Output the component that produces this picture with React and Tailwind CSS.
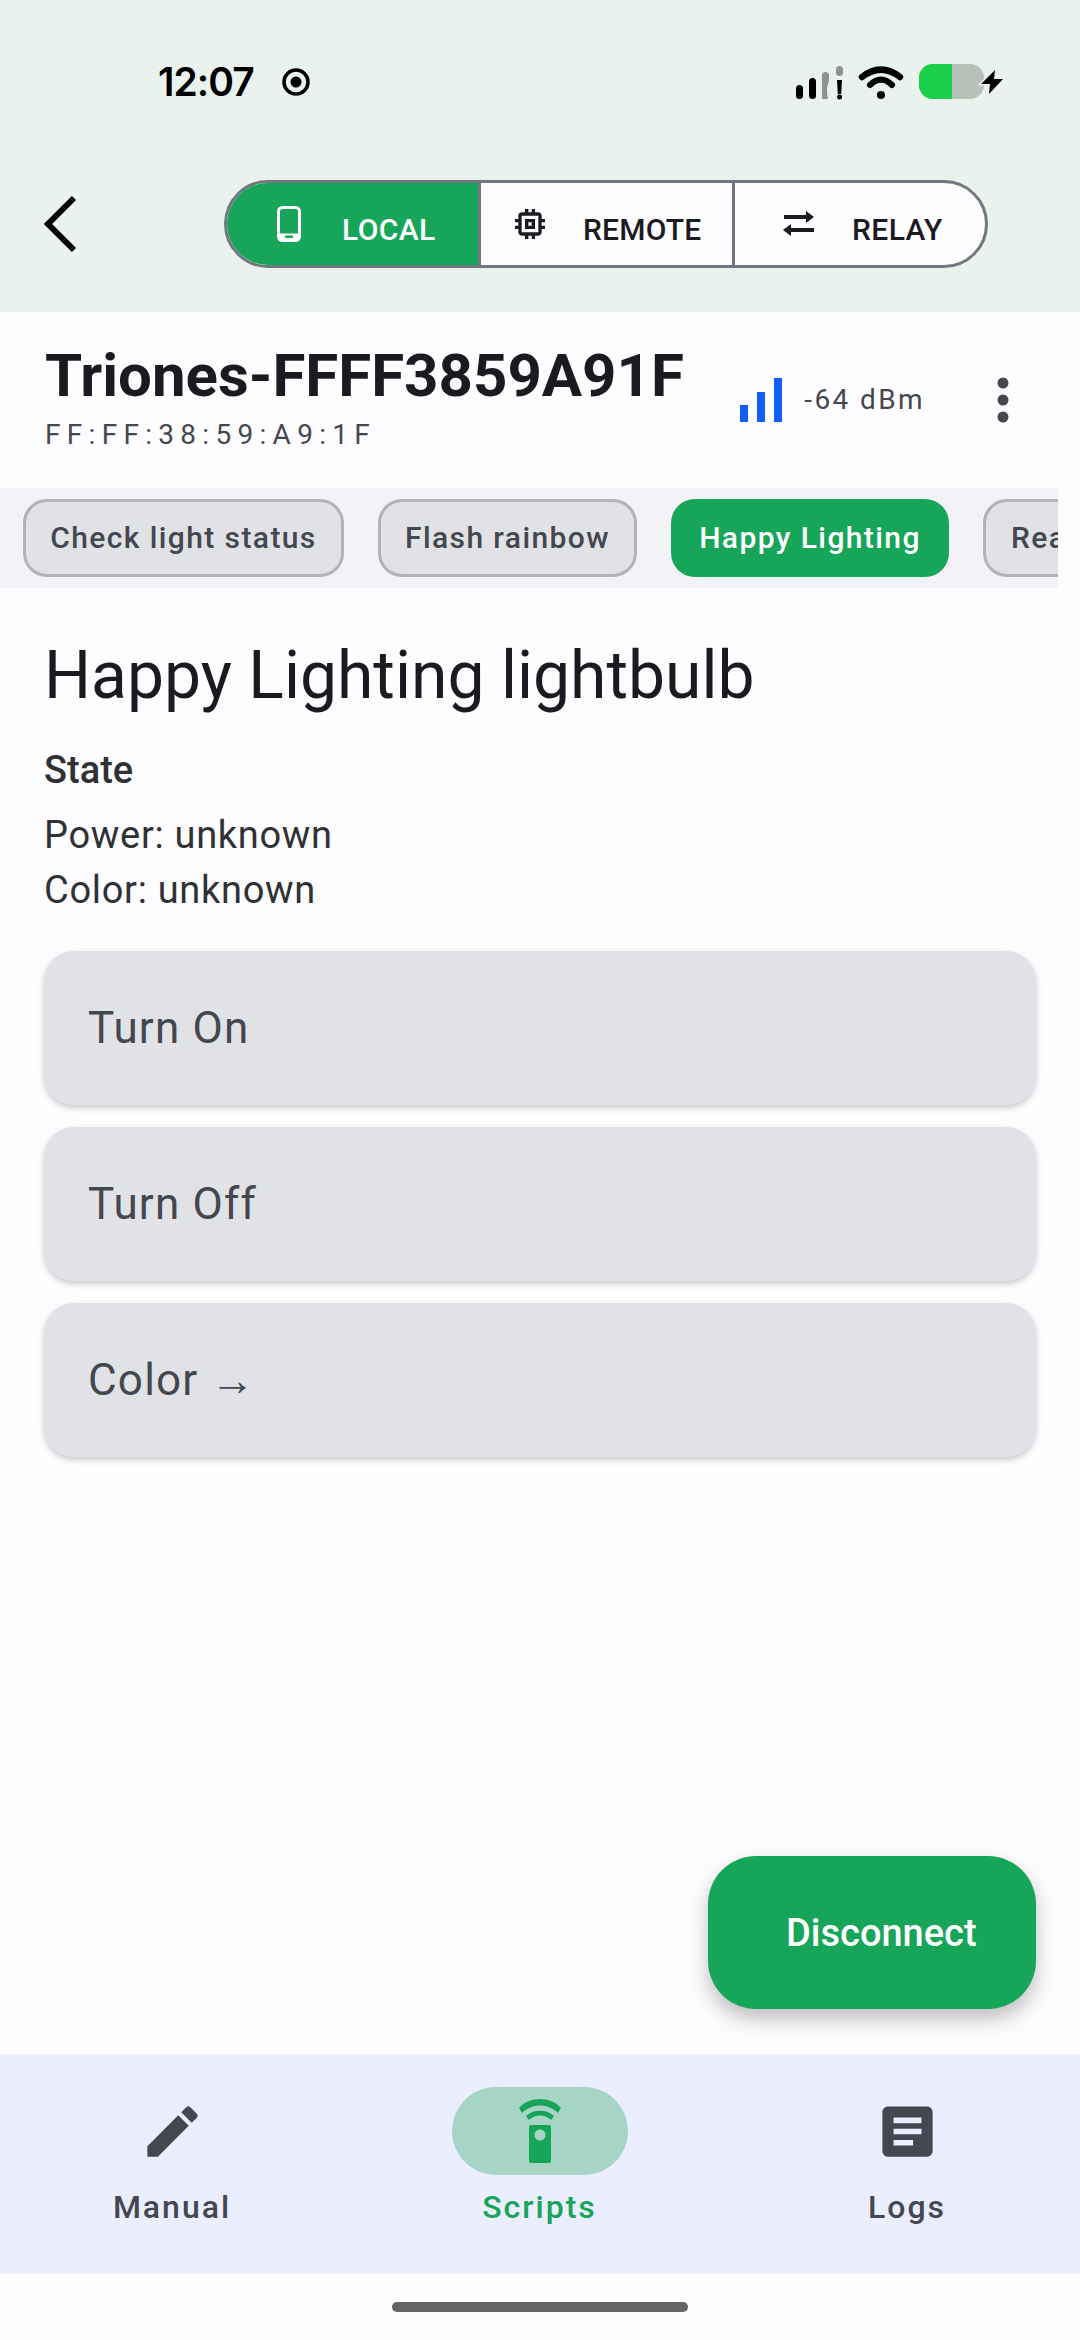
import React from "react";

const Chip = ({ children, active, w }) => (
  <div className={`shrink-0 h-[78px] rounded-[24px] flex items-center justify-center text-[30px] font-medium tracking-[1.4px] leading-[36px] pb-[1px] ${active ? "bg-[#17a55a] text-white" : "bg-[#e0e2e5] text-[#44474f] border-[3px] border-[#b2b3b7]"} ${w}`}>
    {children}
  </div>
);

const Action = ({ children }) => (
  <div className="h-[154px] rounded-[30px] bg-[#e0e2e5] shadow-[0_3px_6px_rgba(0,0,0,0.2)] flex items-center pl-[44px] text-[44px] tracking-[1.200px] text-[#44474f]">
    {children}
  </div>
);

const NavItem = ({ icon, label, active }) => (
  <div className="w-[176px] flex flex-col items-center">
    <div className={`w-[176px] h-[88px] rounded-[44px] flex items-center justify-center ${active ? "bg-[#a6d5c6]" : ""}`}>{icon}</div>
    <div className={`mt-[8px] text-[32px] leading-[48px] font-medium tracking-[2px] whitespace-nowrap ${active ? "text-[#17a55a]" : "text-[#44474f]"}`}>{label}</div>
  </div>
);

export default function App() {
  return (
    <div className="w-[1080px] h-[2340px] flex flex-col bg-[#fdfcff] overflow-hidden font-['Roboto',sans-serif]">
      <div className="h-[312px] bg-[#e9f2ec] flex flex-col">
        <div className="h-[164px] flex items-center pl-[158px] pr-[77px]">
          <span className="text-[39px] font-semibold text-black font-['Inter',sans-serif] tracking-[-1px]">12:07</span>
          <svg className="ml-[27px]" width="30" height="30" viewBox="0 0 30 30"><circle cx="15" cy="15" r="12" fill="none" stroke="#000" strokeWidth="3.500"/><circle cx="15" cy="15" r="5.500" fill="#000"/></svg>
          <div className="flex-1" />
          <svg width="207" height="36" viewBox="0 0 207 36">
            <rect x="0" y="21" width="7" height="14" rx="3.500" fill="#000"/>
            <rect x="13" y="14" width="7" height="21" rx="3.500" fill="#000"/>
            <path d="M26 35 V11.500 a3.500 3.500 0 0 1 7 0 v6 q-3.500 5 -1 17.500 Z" fill="#8f928f"/>
            <rect x="40" y="2" width="7" height="10" rx="3.500" fill="#8f928f"/>
            <path d="M41 16 h5 l-.8 14 h-3.400 Z" fill="#000"/>
            <circle cx="43.500" cy="33" r="2.500" fill="#000"/>
            <path d="M66 13 Q85 -1.600 104 13" fill="none" stroke="#000" strokeWidth="6.500" strokeLinecap="round"/>
            <path d="M74 21 Q85 10.400 96 21" fill="none" stroke="#000" strokeWidth="6" strokeLinecap="round"/>
            <circle cx="85" cy="31" r="4" fill="#000"/>
            <rect x="123" y="0" width="65" height="35" rx="14" fill="#b8c0ba"/>
            <path d="M137 0 h19 v35 h-19 a14 14 0 0 1 -14 -14 v-7 a14 14 0 0 1 14 -14 Z" fill="#1bd14b"/>
            <path d="M199 6 L185 20 H194 L193 30 L207 15 H198 Z" fill="#000" stroke="#e9f2ec" strokeWidth="3" paintOrder="stroke"/>
          </svg>
        </div>
        <div className="h-[88px] mt-[16px] flex items-center pl-[40px]">
          <svg width="44" height="60" viewBox="0 0 44 60" fill="none"><path d="M34 4 L8 30 L34 56" stroke="#000" strokeWidth="6"/></svg>
          <div className="ml-[140px] w-[764px] h-[88px] rounded-[44px] border-[3px] border-[#72767e] flex overflow-hidden bg-[#fdfcff] text-[30px] font-medium">
            <div className="w-[251px] bg-[#17a55a] text-white flex items-center pl-[50px]">
              <svg width="24" height="36" viewBox="0 0 24 36" fill="none"><rect x="1.500" y="1.500" width="21" height="33" rx="4" stroke="#fff" strokeWidth="3"/><path d="M2 27.500h20V31a3 3 0 0 1-3 3H5a3 3 0 0 1-3-3Z" fill="#fff"/><rect x="8" y="29.500" width="8" height="2.500" fill="#17a55a"/></svg>
              <span className="ml-[41px] pt-[10px] tracking-[0.4px]">LOCAL</span>
            </div>
            <div className="w-[254px] border-l-[3px] border-[#72767e] text-[#1b1b1f] flex items-center pl-[29px]">
              <svg width="40" height="40" viewBox="0 0 24 24" fill="#1b1b1f"><path d="M15 9H9v6h6V9zm-2 4h-2v-2h2v2zm8-2V9h-2V7c0-1.100-.9-2-2-2h-2V3h-2v2h-2V3H9v2H7c-1.100 0-2 .9-2 2v2H3v2h2v2H3v2h2v2c0 1.100.9 2 2 2h2v2h2v-2h2v2h2v-2h2c1.100 0 2-.9 2-2v-2h2v-2h-2v-2h2zm-4 6H7V7h10v10z"/></svg>
              <span className="ml-[33px] pt-[10px] tracking-[0.2px]">REMOTE</span>
            </div>
            <div className="flex-1 border-l-[3px] border-[#72767e] text-[#1b1b1f] flex items-center pl-[48px]">
              <svg width="32" height="26" viewBox="0 0 32 26" fill="#1b1b1f"><rect x="1" y="4" width="24" height="4"/><path d="M23 0 L31 6 L23 12 Z"/><rect x="6" y="17" width="25" height="4"/><path d="M8 13 L0 19 L8 25 Z"/></svg>
              <span className="ml-[37px] pt-[10px] tracking-[0.4px]">RELAY</span>
            </div>
          </div>
        </div>
      </div>

      <div className="h-[176px] flex items-center pl-[45px] pr-[71px]">
        <div className="flex-1">
          <div className="text-[60px] leading-[68px] font-bold text-[#1b1b1f] -mt-[6px]">Triones-FFFF3859A91F</div>
          <div className="text-[28px] leading-[34px] tracking-[6.300px] text-[#44474f] mt-[8px]">FF:FF:38:59:A9:1F</div>
        </div>
        <svg width="42" height="44" viewBox="0 0 42 44"><rect x="0" y="27" width="8" height="17" fill="#1160f5"/><rect x="17" y="14" width="8" height="30" fill="#1160f5"/><rect x="34" y="0" width="8" height="44" fill="#1160f5"/></svg>
        <span className="ml-[22px] text-[28px] tracking-[2.400px] text-[#44474f]">-64 dBm</span>
        <svg className="ml-[72px]" width="12" height="46" viewBox="0 0 12 46"><circle cx="6" cy="6" r="5.500" fill="#44474f"/><circle cx="6" cy="23" r="5.500" fill="#44474f"/><circle cx="6" cy="40" r="5.500" fill="#44474f"/></svg>
      </div>

      <div className="h-[100px] bg-[#f3f3f7] flex items-center gap-[34px] pl-[23px] w-[1058px] overflow-hidden">
        <Chip w="w-[321px]">Check light status</Chip>
        <Chip w="w-[259px]">Flash rainbow</Chip>
        <Chip active w="w-[278px]">Happy Lighting</Chip>
        <Chip w="w-[300px]"><span className="w-full pl-[25px]">Read</span></Chip>
      </div>

      <div className="px-[44px] pt-[50px] flex-1 flex flex-col relative">
        <h1 className="text-[66px] leading-[76px] text-[#1b1b1f]">Happy Lighting lightbulb</h1>
        <div className="mt-[33px] text-[38px] leading-[46px] font-medium text-[#303135]">State</div>
        <div className="mt-[15px] text-[38px] leading-[55px] tracking-[0.700px] text-[#303135]">Power: unknown</div>
        <div className="text-[38px] leading-[55px] tracking-[0.700px] text-[#303135]">Color: unknown</div>
        <div className="mt-[33px] flex flex-col gap-[22px]">
          <Action>Turn On</Action>
          <Action>Turn Off</Action>
          <Action>Color →</Action>
        </div>
        <div className="absolute right-[44px] bottom-[45px] w-[328px] h-[153px] rounded-[48px] bg-[#17a55a] shadow-[0_10px_20px_rgba(0,0,0,0.25)] flex items-center pl-[78px] pt-[2px] text-[38px] font-medium text-white">
          Disconnect
        </div>
      </div>

      <div className="h-[220px] bg-[#eaeeff] flex justify-between pt-[33px] pl-[84px] pr-[85px]">
        <NavItem label="Manual" icon={<svg width="67" height="67" viewBox="0 0 24 24" fill="#44474f"><path d="M3 17.250V21h3.750L17.810 9.940l-3.750-3.750L3 17.250zM20.710 7.040c.39-.39.39-1.020 0-1.410l-2.340-2.340c-.39-.39-1.020-.39-1.410 0l-1.830 1.830 3.750 3.750 1.830-1.830z"/></svg>} />
        <NavItem active label="Scripts" icon={<svg width="42" height="64" viewBox="0 0 42 64" fill="#17a55a"><path d="M0 9 C10 -3 32 -3 42 9 L39 14 C29 4 13 4 3 14 Z"/><path d="M7 17 C14 10 28 10 35 17 L32 21 C26 15 16 15 10 21 Z"/><rect x="10" y="26" width="22" height="38" rx="2"/><ellipse cx="21" cy="36" rx="5.500" ry="5.500" fill="#a6d5c6"/></svg>} />
        <NavItem label="Logs" icon={<svg width="67" height="67" viewBox="0 0 24 24" fill="#44474f"><path d="M19 3H5c-1.100 0-2 .9-2 2v14c0 1.100.9 2 2 2h14c1.100 0 2-.9 2-2V5c0-1.100-.9-2-2-2zm-5 14H7v-2h7v2zm3-4H7v-2h10v2zm0-4H7V7h10v2z"/></svg>} />
      </div>

      <div className="h-[66px] flex justify-center pt-[28px]">
        <div className="w-[296px] h-[10px] rounded-full bg-[#646366]" />
      </div>
    </div>
  );
}
